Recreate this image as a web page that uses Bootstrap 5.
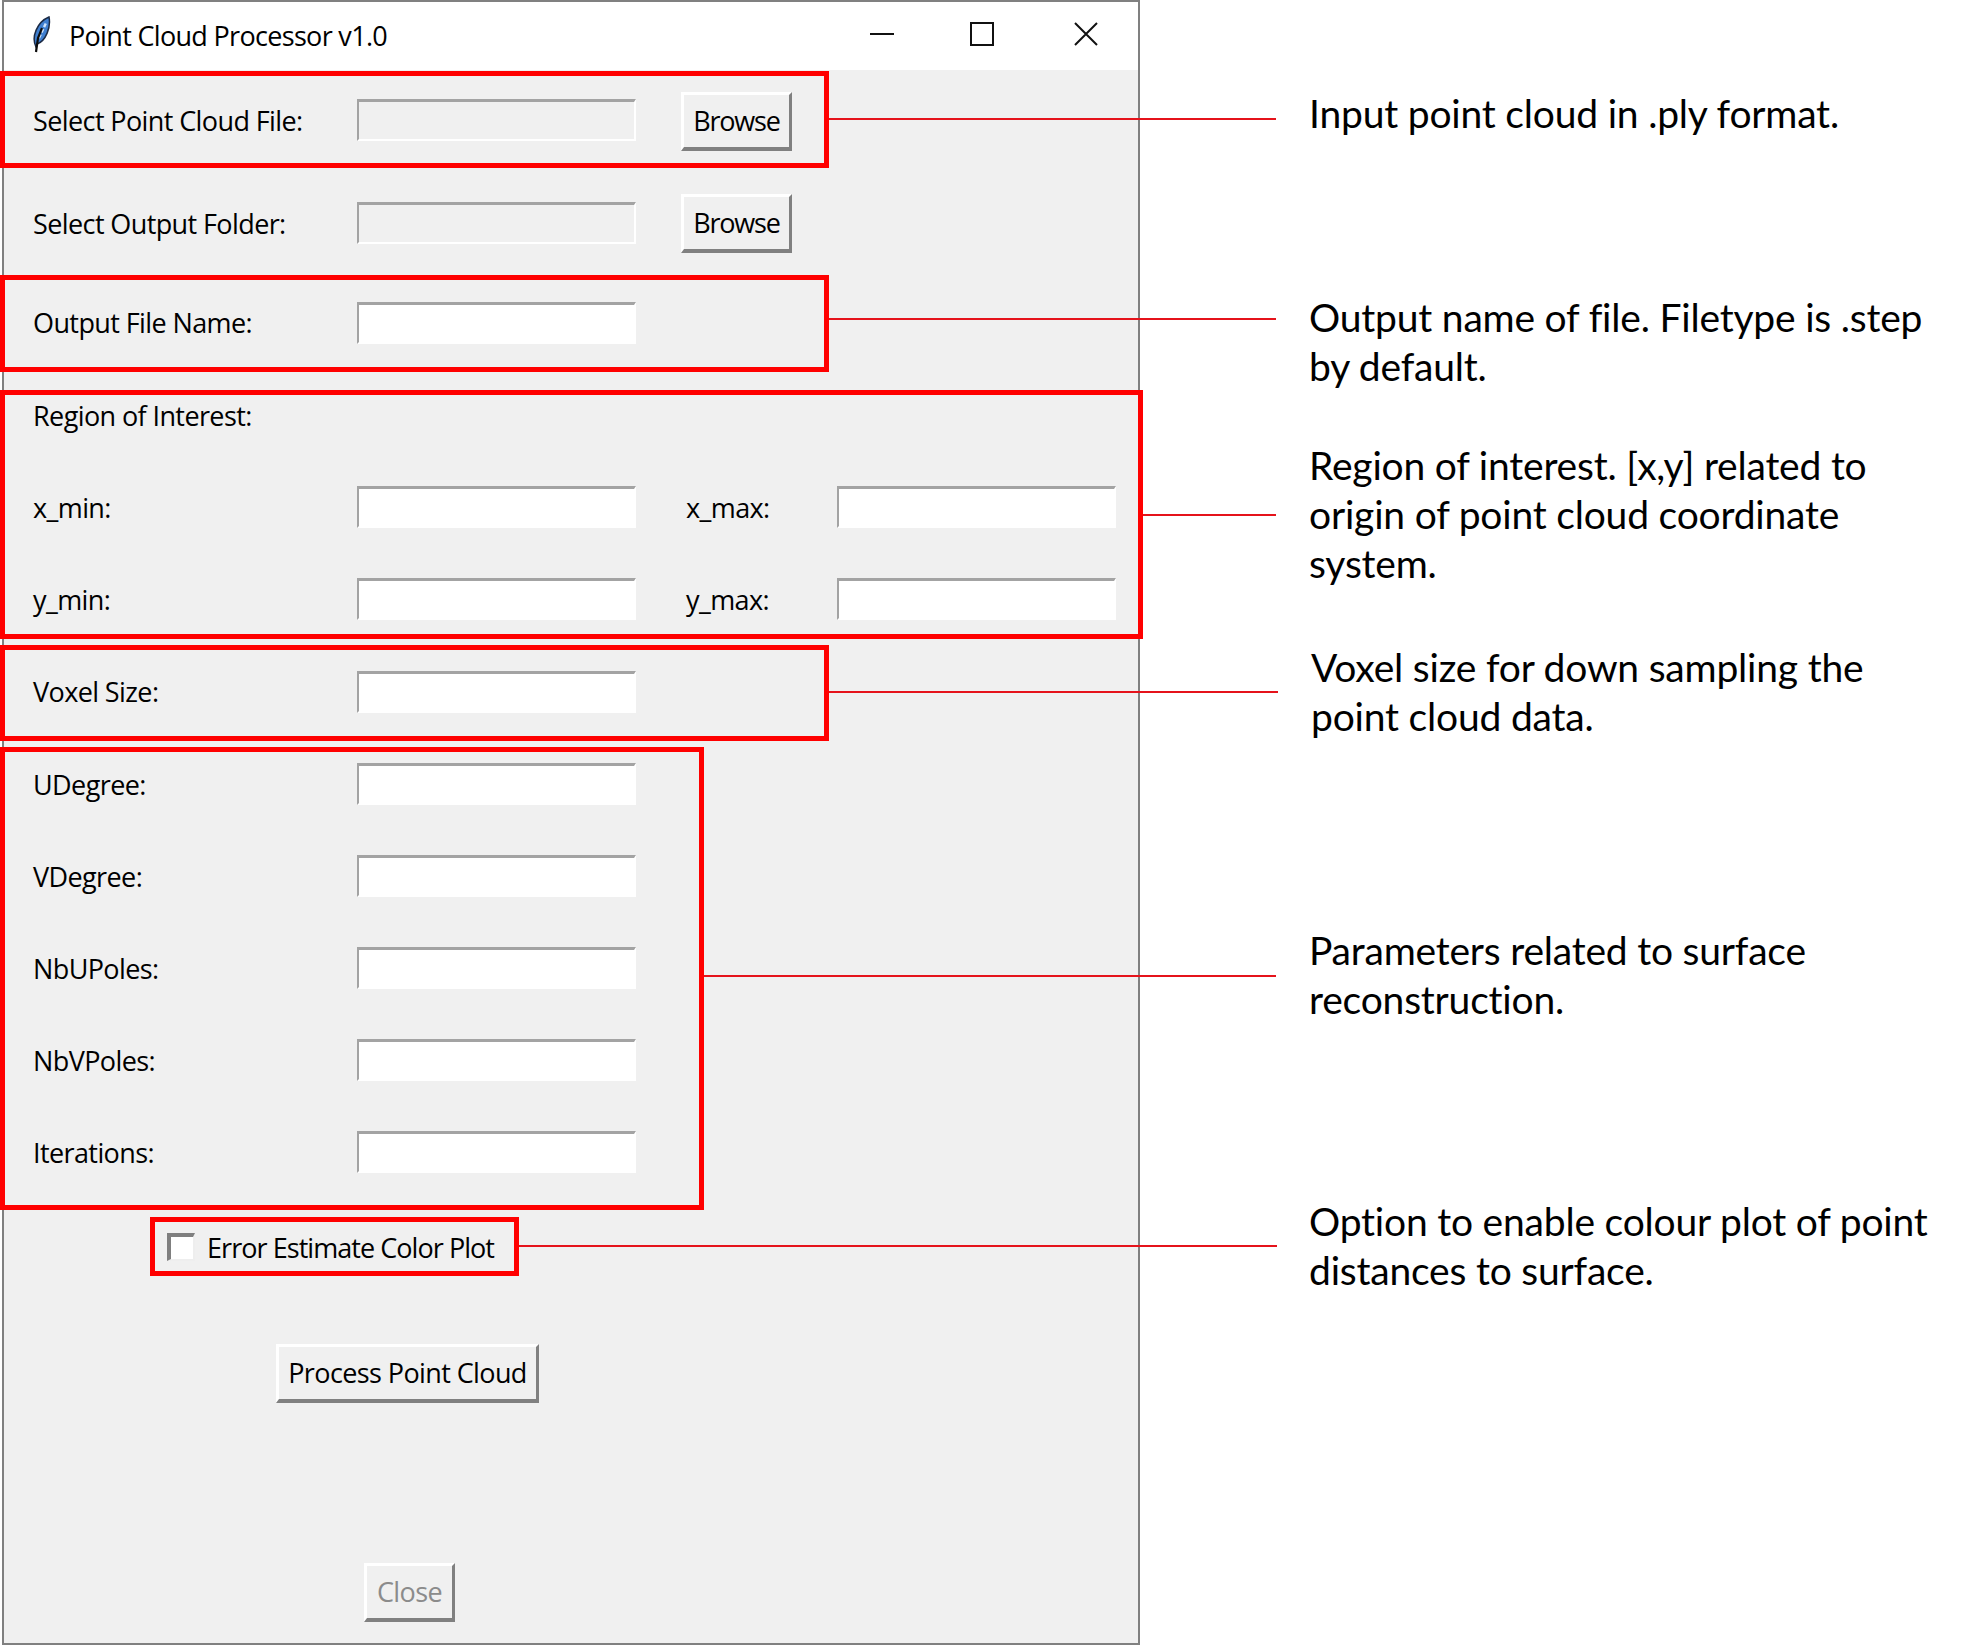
<!DOCTYPE html>
<html lang="en">
<head>
<meta charset="utf-8">
<title>Point Cloud Processor v1.0</title>
<link href="https://cdn.jsdelivr.net/npm/bootstrap@5.3.0/dist/css/bootstrap.min.css" rel="stylesheet">
<style>
html,body{margin:0;background:#fff}
.shot{width:1967px;height:1646px;overflow:hidden}
.tkwin{width:1138px;height:1645px;margin-left:2px;flex:none;background:#f0f0f0;border:2px solid #808080;font-family:"Open Sans","Noto Sans",sans-serif;font-size:27px;letter-spacing:-.6px;color:#000}
.tkbar{height:68px;background:#fff;padding:0 1px 0 17px}
.tktitle{margin-left:18px;letter-spacing:-.68px}
.wctl{width:102px;height:64px;margin-bottom:4px}
.wctl-max{margin-right:2px;margin-left:-2px}
.tkbody{margin:0 -2px}
.redbox{border:5px solid #f00;margin-left:-2px;position:relative}
.redbox::after{content:"";position:absolute;height:2px;background:#e5131b}
.rb-file{width:829px;height:97px;margin-top:1px;padding-left:28px}
.rb-file .lbl{margin-top:2px}
.rb-file::after{left:824px;width:447px;top:42px}
.rb-name{width:829px;height:97px;padding-left:28px}
.rb-name::after{left:824px;width:447px;top:38px}
.rb-name .tkentry,.rb-name .lbl{margin-top:-2px}
.rb-roi{width:1143px;height:249px;margin-top:18px;padding-left:28px}
.rb-roi::after{left:1138px;width:133px;top:119px}
.rb-voxel{width:829px;height:96px;margin-top:6px;padding-left:28px}
.rb-voxel::after{left:824px;width:449px;top:41px}
.rb-voxel .tkentry,.rb-voxel .lbl{margin-top:-3px}
.rb-surf{width:704px;height:463px;margin-top:6px;padding:11px 0 0 28px}
.rb-surf::after{left:699px;width:572px;top:223px}
.rb-check{width:369px;height:59px;margin:7px 0 0 148px;padding-left:12px}
.rb-check::after{left:364px;width:758px;top:23px}
.rb-check label{letter-spacing:-.95px;margin-top:4px}
.rb-check .tkcheck{margin-top:2px}
.plainrow{height:107px;padding-left:31px}
.plainrow>*{margin-top:3px}
.rowgap{row-gap:50px}
.lbl{width:324px;flex:none;line-height:1}
.lbl2{width:151px;flex:none;margin-left:50px;line-height:1}
.roi-head{height:40px;margin-bottom:51px;line-height:1}
.frow{height:42px}
.tkentry.form-control{width:279px;height:42px;flex:none;padding:0;border-radius:0;background:#fff;border:solid;border-width:3px 2px 2px 2px;border-color:#a3a3a3 #fff #fff #a3a3a3;box-shadow:none}
.tkentry.form-control:disabled{background:#f0f0f0;border-color:#a3a3a3 #fff #fff #a3a3a3}
.tkbtn.btn{border-radius:0;padding:0;height:59px;background:#f0f0f0;color:#000;font:inherit;letter-spacing:inherit;border:solid;border-width:3px 3px 4px 3px;border-color:#fff #808080 #808080 #fff;box-shadow:none}
.tkbtn.browse{width:111px;margin:4px 0 0 45px;letter-spacing:-1.2px}
.plainrow .tkbtn.browse{margin-top:4px}
.tkbtn.process{width:263px;margin:68px 0 0 274px;display:block}
.tkbtn.closeb{width:91px;margin:160px 0 0 362px;display:block;color:#8b8b8b}
.tkbtn.closeb:disabled{opacity:1;color:#8b8b8b;background:#f0f0f0;border-color:#fff #808080 #808080 #fff}
.tkcheck.form-check-input{width:28px;height:28px;margin:0 12px 0 0;flex:none;border-radius:0;background:#fff;border:solid;border-width:4px 2px 2px 4px;border-color:#7f7f7f #eee #eee #7f7f7f;box-shadow:none}
.notes{margin-left:169px;font-family:Lato,"Noto Sans",sans-serif;font-size:39px;line-height:49px;color:#000;letter-spacing:-.2px}
.notes p{margin:0;white-space:nowrap}
.nt1{margin-top:89px!important}
.nt2{margin-top:155px!important}
.nt3{margin-top:50px!important}
.nt4{margin-top:55px!important;margin-left:2px!important}
.nt5{margin-top:185px!important}
.nt6{margin-top:173px!important}
</style>
</head>
<body>
<div class="shot d-flex">
  <div class="tkwin">
    <div class="tkbar d-flex align-items-center">
      <svg width="30" height="40" viewBox="0 0 30 40" aria-hidden="true">
        <path d="M15 31 C10 21 16 6 28 1 C30 11 25 25 16 28 Z" fill="#3f7fd0" stroke="#1b2a44" stroke-width="1.5"/>
        <path d="M18 22 L25 7" stroke="#cfe3fb" stroke-width="2.4" stroke-dasharray="4 2"/>
        <path d="M15 36 L17 22 L21 12" stroke="#0c0c0c" stroke-width="2.2" fill="none"/>
      </svg>
      <span class="tktitle flex-grow-1">Point Cloud Processor v1.0</span>
      <div class="wctl d-flex align-items-center justify-content-center"><svg width="24" height="24" viewBox="0 0 24 24" aria-hidden="true"><path d="M0 12H24" stroke="#111" stroke-width="2"/></svg></div>
      <div class="wctl wctl-max d-flex align-items-center justify-content-center"><svg width="24" height="24" viewBox="0 0 24 24" aria-hidden="true"><rect x="1" y="1" width="22" height="22" fill="none" stroke="#111" stroke-width="2"/></svg></div>
      <div class="wctl d-flex align-items-center justify-content-center"><svg width="24" height="24" viewBox="0 0 24 24" aria-hidden="true"><path d="M1 1L23 23M23 1L1 23" stroke="#111" stroke-width="2"/></svg></div>
    </div>
    <div class="tkbody">
      <div class="redbox rb-file d-flex align-items-center">
        <span class="lbl">Select Point Cloud File:</span>
        <input class="form-control tkentry" disabled>
        <button class="btn tkbtn browse">Browse</button>
      </div>
      <div class="plainrow d-flex align-items-center">
        <span class="lbl">Select Output Folder:</span>
        <input class="form-control tkentry" disabled>
        <button class="btn tkbtn browse">Browse</button>
      </div>
      <div class="redbox rb-name d-flex align-items-center">
        <span class="lbl">Output File Name:</span>
        <input class="form-control tkentry">
      </div>
      <div class="redbox rb-roi">
        <div class="roi-head d-flex align-items-center">Region of Interest:</div>
        <div class="d-flex flex-column rowgap">
          <div class="frow d-flex align-items-center"><span class="lbl">x_min:</span><input class="form-control tkentry"><span class="lbl2">x_max:</span><input class="form-control tkentry"></div>
          <div class="frow d-flex align-items-center"><span class="lbl">y_min:</span><input class="form-control tkentry"><span class="lbl2">y_max:</span><input class="form-control tkentry"></div>
        </div>
      </div>
      <div class="redbox rb-voxel d-flex align-items-center">
        <span class="lbl">Voxel Size:</span>
        <input class="form-control tkentry">
      </div>
      <div class="redbox rb-surf d-flex flex-column rowgap">
        <div class="frow d-flex align-items-center"><span class="lbl">UDegree:</span><input class="form-control tkentry"></div>
        <div class="frow d-flex align-items-center"><span class="lbl">VDegree:</span><input class="form-control tkentry"></div>
        <div class="frow d-flex align-items-center"><span class="lbl">NbUPoles:</span><input class="form-control tkentry"></div>
        <div class="frow d-flex align-items-center"><span class="lbl">NbVPoles:</span><input class="form-control tkentry"></div>
        <div class="frow d-flex align-items-center"><span class="lbl">Iterations:</span><input class="form-control tkentry"></div>
      </div>
      <div class="redbox rb-check d-flex align-items-center">
        <input type="checkbox" class="form-check-input tkcheck" id="errplot">
        <label for="errplot">Error Estimate Color Plot</label>
      </div>
      <button class="btn tkbtn process">Process Point Cloud</button>
      <button class="btn tkbtn closeb" disabled>Close</button>
    </div>
  </div>
  <div class="notes">
    <p class="nt1">Input point cloud in .ply format.</p>
    <p class="nt2">Output name of file. Filetype is .step<br>by default.</p>
    <p class="nt3">Region of interest. [x,y] related to<br>origin of point cloud coordinate<br>system.</p>
    <p class="nt4">Voxel size for down sampling the<br>point cloud data.</p>
    <p class="nt5">Parameters related to surface<br>reconstruction.</p>
    <p class="nt6">Option to enable colour plot of point<br>distances to surface.</p>
  </div>
</div>
<script src="https://cdn.jsdelivr.net/npm/bootstrap@5.3.0/dist/js/bootstrap.bundle.min.js"></script>
</body>
</html>
